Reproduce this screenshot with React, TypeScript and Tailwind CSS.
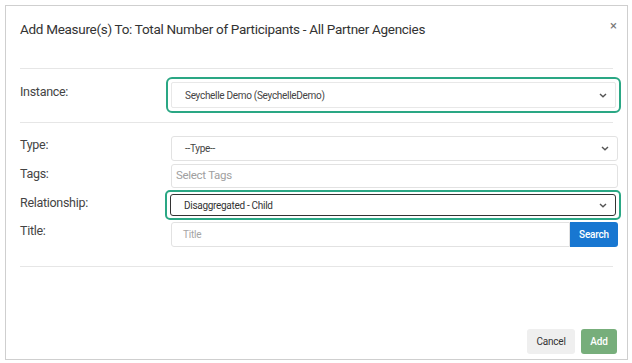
import React from 'react'

// Modal: add measure(s) to a grouping

const font = { fontFamily: 'Roboto, "Liberation Sans", sans-serif' }

function Chevron() {
  return (
    <svg width="8" height="5" viewBox="0 0 8 5" className="shrink-0">
      <path d="M1 1 L4 3.8 L7 1" fill="none" stroke="#555" strokeWidth="1.4" />
    </svg>
  )
}

function SelectBox({
  value,
  className,
  textClass,
}: {
  value: string
  className: string
  textClass?: string
}) {
  return (
    <div
      className={`flex shrink-0 items-center justify-between bg-white pl-[13px] pr-[8px] ${className}`}
    >
      <span className={`text-[10px] tracking-[-0.3px] ${textClass ?? 'text-[#444]'}`}>{value}</span>
      <Chevron />
    </div>
  )
}

function Label({ text, className }: { text: string; className: string }) {
  return (
    <div
      className={`w-[151px] shrink-0 text-[12.5px] tracking-[-0.3px] leading-[16px] text-[#444] ${className}`}
    >
      {text}
    </div>
  )
}

export default function App() {
  return (
    <div className="w-[632px] h-[363px] bg-white pt-[5px] pl-[5px]" style={font}>
      <div className="w-[623px] h-[355px] border border-[#cfcfcf] flex flex-col px-[14px]">
        {/* Header */}
        <div className="flex items-start justify-between pt-[14px] h-[63px] border-b border-[#e6e6e6]">
          <h2 className="text-[13.5px] tracking-[-0.3px] leading-[18px] text-[#333] font-normal">
            Add Measure(s) To: Total Number of Participants - All Partner Agencies
          </h2>
          <span className="text-[13px] leading-[14px] text-[#777] -mr-[4px] -mt-[1px]">×</span>
        </div>

        {/* Instance */}
        <div className="flex items-start pt-[8px] pb-[9px] border-b border-[#e6e6e6]">
          <Label text="Instance:" className="pt-[7px]" />
          <div className="-ml-[5px] w-[455px] shrink-0 border-2 border-[#2aa784] rounded-[6px] p-[3px]">
            <SelectBox
              value="Seychelle Demo (SeychelleDemo)"
              className="h-[26px] border border-[#e8e8e8] rounded-[2px]"
            />
          </div>
        </div>

        {/* Filters */}
        <div className="flex flex-col pt-[13px] pb-[19px] border-b border-[#e6e6e6]">
          <div className="flex items-start">
            <Label text="Type:" className="pt-[1px]" />
            <SelectBox
              value="--Type--"
              className="w-[447px] h-[25px] border border-[#e2e2e2] rounded-[3px]"
            />
          </div>
          <div className="flex items-start mt-[3px]">
            <Label text="Tags:" className="pt-[2px]" />
            <div className="w-[447px] shrink-0 h-[24px] border border-[#e2e2e2] rounded-[3px] flex items-center pl-[4px]">
              <span className="text-[11.5px] tracking-[-0.3px] text-[#a0a0a0]">Select Tags</span>
            </div>
          </div>
          <div className="flex items-start mt-[2px]">
            <Label text="Relationship:" className="pt-[5px]" />
            <div className="-ml-[6px] w-[456px] shrink-0 border-2 border-[#2aa784] rounded-[5px] px-[3px] py-[2px]">
              <SelectBox
                value="Disaggregated - Child"
                textClass="text-[#333]"
                className="h-[22px] border border-[#333] rounded-[3px]"
              />
            </div>
          </div>
          <div className="flex items-start mt-[2px]">
            <Label text="Title:" className="pt-[1px]" />
            <div className="w-[447px] shrink-0 h-[25px] flex">
              <div className="flex-1 border border-[#e2e2e2] rounded-l-[3px] flex items-center pl-[11px]">
                <span className="text-[10px] tracking-[-0.2px] text-[#a5a5a5]">Title</span>
              </div>
              <button className="w-[48px] bg-[#1877d1] text-white text-[10px] tracking-[-0.2px] font-medium rounded-r-[3px]">
                Search
              </button>
            </div>
          </div>
        </div>

        {/* Footer */}
        <div className="mt-auto flex justify-end gap-[6px] pb-[5px] -mr-[4px]">
          <button className="w-[48px] h-[25px] bg-[#efefef] text-[#333] text-[10px] tracking-[-0.2px] rounded-[3px]">
            Cancel
          </button>
          <button className="w-[36px] h-[25px] bg-[#77ae7b] text-white text-[10px] tracking-[-0.2px] font-medium rounded-[3px]">
            Add
          </button>
        </div>
      </div>
    </div>
  )
}
